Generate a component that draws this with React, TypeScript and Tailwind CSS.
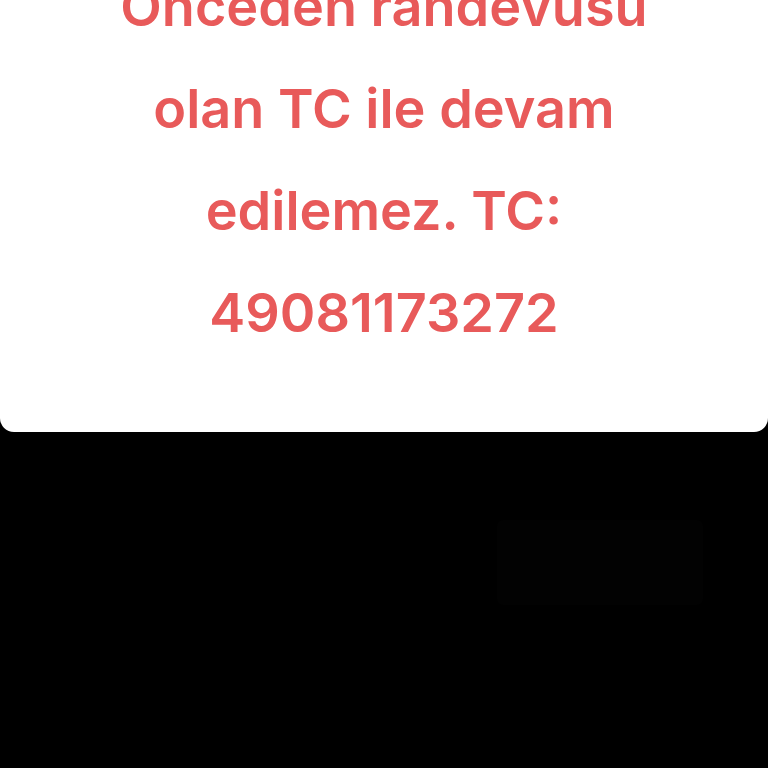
export default function App() {
  return (
    <div className="w-[768px] h-[768px] bg-black overflow-hidden relative">
      {/* Alert card */}
      <div className="bg-white rounded-b-[14px] h-[432px] flex flex-col items-center justify-end pb-[68px] overflow-hidden">
        <p
          className="text-center text-[#e85a5a] font-semibold text-[54px] leading-[102px]"
          style={{ fontFamily: "Inter, 'Open Sans', sans-serif" }}
        >
          Önceden randevusu
          <br />
          olan TC ile devam
          <br />
          edilemez. TC:
          <br />
          49081173272
        </p>
      </div>

      {/* Dimmed background content */}
      <div className="flex justify-end pr-[65px] pt-[88px]">
        <div className="w-[206px] h-[85px] rounded-[6px] bg-[#020202]" />
      </div>
    </div>
  );
}
